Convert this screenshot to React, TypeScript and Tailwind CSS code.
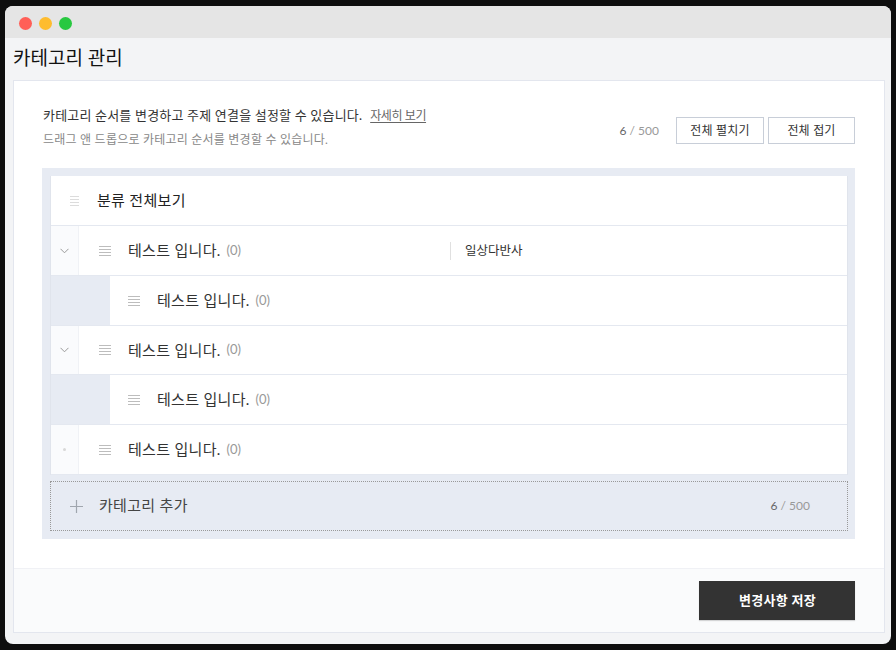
import React from 'react';

const font = "[font-family:Lato,'Noto_Sans_CJK_KR',sans-serif]";

const Grip = ({ light }: { light?: boolean }) => (
  <svg width={light ? 9 : 12} height="10" viewBox={light ? '0 0 9 10' : '0 0 12 10'} className="shrink-0">
    {[0.5, 3.5, 6.5, 9.5].map((y) => (
      <line key={y} x1="0" x2="12" y1={y} y2={y} stroke={light ? '#dcdcdc' : '#bdbdbd'} strokeWidth="1" />
    ))}
  </svg>
);

const Count = () => <span className="ml-[6px] text-[13px] text-[#999]">(0)</span>;

const Row = ({ kind, topic, short }: { kind: 'open' | 'child' | 'leaf'; topic?: string; short?: boolean }) => (
  <div className={`flex border-b border-[#e4e8f0] bg-white ${short ? 'h-[49px]' : 'h-[50px]'}`}>
    {kind === 'child' ? (
      <div className="w-[59px] shrink-0 bg-[#e7ebf3]" />
    ) : (
      <div className="flex w-[28px] shrink-0 items-center justify-center border-r border-[#f0f2f6] bg-[#fafbfd]">
        {kind === 'open' ? (
          <svg width="9" height="6" viewBox="0 0 9 6">
            <path d="M0.5 0.8 L4.5 4.8 L8.5 0.8" fill="none" stroke="#999" strokeWidth="1" />
          </svg>
        ) : (
          <span className="h-[3px] w-[3px] rounded-full bg-[#d8d8d8]" />
        )}
      </div>
    )}
    <div className={`flex min-w-0 flex-1 items-center ${kind === 'child' ? 'pl-[18px]' : 'pl-5'}`}>
      <Grip />
      <div className="ml-[17px] flex w-[322px] items-center">
        <span className="text-[15px] tracking-[0.3px] text-[#333]">테스트 입니다.</span>
        <Count />
      </div>
      {topic && (
        <div className="flex h-[18px] items-center border-l border-[#e0e0e0] pl-[14px] pt-[1px] text-[12.5px] text-[#333]">{topic}</div>
      )}
    </div>
  </div>
);

export default function App() {
  return (
    <div className={`h-[650px] bg-[#0e0e0e] px-[5px] py-[6px] ${font}`}>
      <div className="flex h-full flex-col overflow-hidden rounded-[8px] bg-[#f3f4f6]">
        <div className="flex h-[32px] shrink-0 items-start gap-[7px] bg-[#e5e5e5] pl-[13.5px] pt-[10.5px]">
          <span className="h-[13px] w-[13px] rounded-full bg-[#ff5f57]" />
          <span className="h-[13px] w-[13px] rounded-full bg-[#febc2e]" />
          <span className="h-[13px] w-[13px] rounded-full bg-[#28c840]" />
        </div>
        <h1 className="flex h-[42px] shrink-0 items-center pb-[2px] pl-[8px] text-[19px] font-normal text-[#111]">카테고리 관리</h1>
        <div className="ml-[8px] mr-[6px] flex h-[553px] flex-col border border-[#e3e6ee] bg-white">
          <div className="flex-1 pl-[28px] pr-[29px] pt-[24px]">
            <div className="flex items-start justify-between">
              <div className="ml-px">
                <p className="text-[13px] leading-[20px] tracking-[0.18px] text-[#333]">
                  카테고리 순서를 변경하고 주제 연결을 설정할 수 있습니다.
                  <span className="ml-2 text-[12px] tracking-[-0.4px] text-[#666] underline underline-offset-2">자세히 보기</span>
                </p>
                <p className="mt-[4px] text-[12px] leading-[20px] tracking-[0.22px] text-[#888]">드래그 앤 드롭으로 카테고리 순서를 변경할 수 있습니다.</p>
              </div>
              <div className="mt-[12px] flex items-center">
                <span className="mr-[17px] text-[12px] text-[#999]">
                  <span className="text-[#666]">6</span> / 500
                </span>
                <button className="mr-[4px] h-[27px] w-[88px] border border-[#c8ced8] bg-white text-[12px] tracking-[0.2px] text-[#333]">전체 펼치기</button>
                <button className="h-[27px] w-[87px] border border-[#c8ced8] bg-white text-[12px] tracking-[0.2px] text-[#333]">전체 접기</button>
              </div>
            </div>
            <div className="mt-[18px] bg-[#e7ebf3] py-[8px] pl-[8px] pr-[7px]">
              <div className="border-x border-[#e0e4ec]">
                <div className="flex h-[50px] items-center border-b border-[#e4e8f0] bg-white pl-[19px]">
                  <Grip light />
                  <span className="ml-[18px] text-[15px] tracking-[0.3px] text-[#222]">분류 전체보기</span>
                </div>
                <Row kind="open" topic="일상다반사" />
                <Row kind="child" />
                <Row kind="open" short />
                <Row kind="child" />
                <Row kind="leaf" />
              </div>
              <div className="mt-[6px] flex h-[50px] items-center border border-dotted border-[#999] pl-[19px]">
                <svg width="13" height="13" viewBox="0 0 13 13">
                  <path d="M6.5 0 V13 M0 6.5 H13" stroke="#a0a6ae" strokeWidth="1.2" />
                </svg>
                <span className="ml-[16px] pb-[2px] text-[15px] tracking-[0.3px] text-[#444]">카테고리 추가</span>
                <span className="ml-auto mr-[37px] text-[12px] text-[#999]">
                  <span className="text-[#666]">6</span> / 500
                </span>
              </div>
            </div>
          </div>
          <div className="flex h-[64px] shrink-0 items-center justify-end border-t border-[#f0f1f5] bg-[#fafbfc] pr-[29px]">
            <button className="h-[39px] w-[156px] bg-[#333] pl-px text-[13px] font-bold tracking-[0.3px] text-white shadow-[0_1px_1px_rgba(0,0,0,0.15)]">변경사항 저장</button>
          </div>
        </div>
      </div>
    </div>
  );
}
